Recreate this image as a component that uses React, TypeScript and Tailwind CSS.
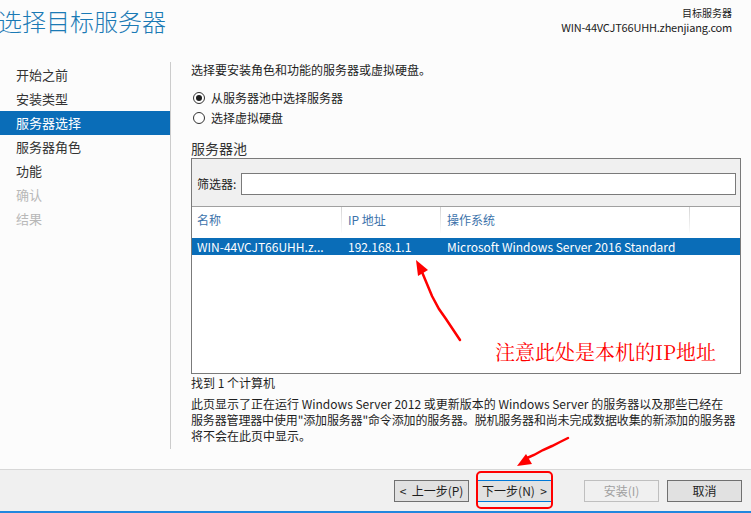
import React from "react";

function Radio({ checked, label }: { checked?: boolean; label: string }) {
  return (
    <div className="flex items-center h-[20px]">
      <div className="ml-[2px] w-[12px] h-[12px] rounded-full border border-[#333333] bg-white flex items-center justify-center">
        {checked && <div className="w-[6px] h-[6px] rounded-full bg-[#1e1e1e]" />}
      </div>
      <span className="ml-[6px] text-[12px] leading-[16px] text-[#1e1e1e]">{label}</span>
    </div>
  );
}

function Sep() {
  return <div className="w-px h-full bg-gradient-to-b from-[#d4d4d4] to-[#fcfcfc]" />;
}

export default function App() {
  const nav = [
    { t: "开始之前", s: "n" },
    { t: "安装类型", s: "n" },
    { t: "服务器选择", s: "a" },
    { t: "服务器角色", s: "n" },
    { t: "功能", s: "n" },
    { t: "确认", s: "d" },
    { t: "结果", s: "d" },
  ];
  return (
    <div className="relative w-[751px] h-[513px] overflow-hidden bg-[#fcfcfc] flex flex-col font-['Noto_Sans_CJK_SC',sans-serif] text-[#1e1e1e]">
      {/* Header */}
      <div className="h-[62px] flex justify-between items-start shrink-0">
        <div className="mt-[5px] -ml-[2px] text-[24px] leading-[32px] text-[#1b7ab5] font-light whitespace-nowrap">
          选择目标服务器
        </div>
        <div className="mt-[6px] mr-[19px] text-right flex flex-col items-end">
          <div className="text-[10px] leading-[14px] text-[#222]">目标服务器</div>
          <div className="text-[11px] leading-[15px] text-[#222] tracking-[-0.2px]">WIN-44VCJT66UHH.zhenjiang.com</div>
        </div>
      </div>

      {/* Body */}
      <div className="flex h-[407px] shrink-0">
        <div className="w-[171px] h-[387px] border-r border-[#cccccc] shrink-0">
          <div className="pt-[1px]">
            {nav.map((n) => (
              <div
                key={n.t}
                className={
                  n.s === "a"
                    ? "h-[24px] leading-[24px] pl-[16px] text-[13px] bg-[#0a6db8] text-white"
                    : n.s === "d"
                    ? "h-[24px] leading-[24px] pl-[16px] text-[13px] text-[#b8b8b8]"
                    : "h-[24px] leading-[24px] pl-[16px] text-[13px] text-[#333333]"
                }
              >
                {n.t}
              </div>
            ))}
          </div>
        </div>

        <div className="pl-[20px] flex flex-col">
          <div className="h-[16px] text-[12px] leading-[16px]">选择要安装角色和功能的服务器或虚拟硬盘。</div>
          <div className="mt-[10px]">
            <Radio checked label="从服务器池中选择服务器" />
            <Radio label="选择虚拟硬盘" />
          </div>
          <div className="mt-[12px] h-[16px] text-[14px] leading-[16px] text-[#333]">服务器池</div>

          <div className="mt-[2px] w-[550px] h-[216px] border border-[#7a7a7a] bg-white flex flex-col">
            <div className="h-[48px] bg-[#f0f0f0] border-b border-[#a0a0a0] flex items-start pt-[14px] shrink-0">
              <span className="ml-[5px] text-[12px] leading-[22px]">筛选器:</span>
              <div className="ml-[5px] w-[495px] h-[22px] border border-[#7a7a7a] bg-white" />
            </div>
            <div className="h-[26px] flex text-[12px] leading-[26px] text-[#3c73ab] shrink-0">
              <div className="w-[149px] pl-[5px]">名称</div>
              <Sep />
              <div className="w-[98px] pl-[6px]">IP 地址</div>
              <Sep />
              <div className="w-[248px] pl-[6px]">操作系统</div>
              <Sep />
              <div className="flex-1" />
            </div>
            <div className="mt-[5px] h-[17px] flex bg-[#0a6db8] text-white text-[12px] leading-[17px] shrink-0">
              <div className="w-[150px] pl-[5px] whitespace-nowrap overflow-hidden">WIN-44VCJT66UHH.z...</div>
              <div className="w-[99px] pl-[6px]">192.168.1.1</div>
              <div className="flex-1 pl-[6px] whitespace-nowrap">Microsoft Windows Server 2016 Standard</div>
            </div>
          </div>

          <div className="mt-[1px] h-[16px] text-[12px] leading-[16px]">找到 1 个计算机</div>
          <div className="mt-[5px] w-[556px] text-[12px] leading-[16px] whitespace-nowrap">
            <div>此页显示了正在运行 Windows Server 2012 或更新版本的 Windows Server 的服务器以及那些已经在</div>
            <div className="tracking-[-0.15px]">服务器管理器中使用"添加服务器"命令添加的服务器。脱机服务器和尚未完成数据收集的新添加的服务器</div>
            <div>将不会在此页中显示。</div>
          </div>
        </div>
      </div>

      {/* Footer */}
      <div className="h-[44px] shrink-0 bg-[#f0f0f0] border-t border-[#d7d7d7] border-b-[2px] border-b-[#2187de] flex justify-end items-start pt-[10px] pr-[9px]">
        <button className="w-[75px] h-[22px] border border-[#707070] bg-[#e1e1e1] text-[12px] leading-[20px] text-[#1e1e1e] whitespace-pre">
          {"<  上一步(P)"}
        </button>
        <button className="ml-[8px] w-[75px] h-[22px] border border-[#0078d7] bg-[#e1e1e1] text-[12px] leading-[20px] text-[#1e1e1e] whitespace-pre">
          {"下一步(N)  >"}
        </button>
        <button className="ml-[32px] w-[75px] h-[22px] border border-[#bfbfbf] bg-[#f0f0f0] text-[12px] leading-[20px] text-[#a0a0a0]">
          安装(I)
        </button>
        <button className="ml-[8px] w-[75px] h-[22px] border border-[#707070] bg-[#e1e1e1] text-[12px] leading-[20px] text-[#1e1e1e]">
          取消
        </button>
      </div>

      {/* Annotations */}
      <div className="absolute left-[495px] top-[339px] text-[20px] leading-[26px] text-[#ff0000] font-['Noto_Serif_CJK_SC','Liberation_Serif','Noto_Sans_CJK_SC',serif] whitespace-nowrap">
        注意此处是本机的IP地址
      </div>
      <div className="absolute left-[476px] top-[471px] w-[77px] h-[38px] border-2 border-[#ff0000] rounded-[5px]" />
      <svg className="absolute inset-0 pointer-events-none" width="751" height="513" viewBox="0 0 751 513">
        <path d="M460 340 L446 319 L439 309 L432 296 L422 272" stroke="#ff0000" strokeWidth="2.5" fill="none" strokeLinecap="round" />
        <polygon points="416,260 428,270 418,276" fill="#ff0000" />
        <path d="M568 438 L560 442 L552 446 L543 450 L534 455 L527 458" stroke="#ff0000" strokeWidth="2.5" fill="none" strokeLinecap="round" />
        <polygon points="517,466 526,454 532,464" fill="#ff0000" />
      </svg>
    </div>
  );
}
